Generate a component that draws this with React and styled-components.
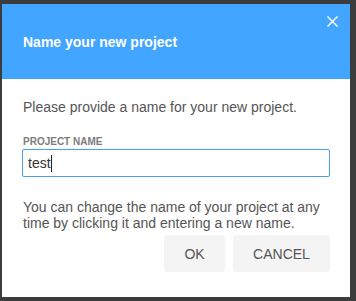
import React from "react";
import styled, { createGlobalStyle } from "styled-components";

const GlobalStyle = createGlobalStyle`
  html, body {
    margin: 0;
    padding: 0;
    background: #3c3c3c;
    font-family: "Liberation Sans", Arial, sans-serif;
  }
`;

const Page = styled.div`
  width: 356px;
  height: 301px;
  padding: 4px 0 0 2px;
  box-sizing: border-box;
  overflow: hidden;
`;

const Dialog = styled.div`
  position: relative;
  width: 348px;
  height: 293px;
  background: #ffffff;
  display: flex;
  flex-direction: column;
`;

const Header = styled.div`
  height: 75px;
  background: #42a5ff;
  display: flex;
  align-items: center;
  padding-left: 21px;
`;

const Title = styled.h2`
  margin: 0;
  color: #ffffff;
  font-size: 14px;
  font-weight: 700;
`;

const CloseButton = styled.button`
  position: absolute;
  top: 7px;
  right: 7px;
  width: 21px;
  height: 21px;
  padding: 0;
  border: 0;
  background: transparent;
  display: flex;
  align-items: center;
  justify-content: center;
  cursor: pointer;
`;

const Body = styled.div`
  padding: 20px 20px 25px 21px;
  display: flex;
  flex-direction: column;
`;

const Text = styled.p`
  margin: 0 0 ${(p) => p.$gap || 0}px;
  font-size: 14px;
  line-height: 16px;
  color: #555555;
`;

const Label = styled.label`
  font-size: 10px;
  line-height: 12px;
  font-weight: 700;
  color: #7c7c7c;
  margin-bottom: 1px;
`;

const Field = styled.div`
  height: 28px;
  margin-left: -1px;
  border: 1px solid #4a9ff5;
  border-radius: 2px;
  box-sizing: border-box;
  padding: 0 5px;
  display: flex;
  align-items: center;
  font-size: 14px;
  color: #333333;
  margin-bottom: 22px;
`;

const Caret = styled.span`
  display: inline-block;
  width: 1px;
  height: 17px;
  background: #222222;
`;

const Actions = styled.div`
  display: flex;
  justify-content: flex-end;
  gap: 8px;
  margin-top: 4px;
`;

const Button = styled.button`
  width: ${(p) => p.$width}px;
  height: 37px;
  border: 0;
  border-radius: 3px;
  background: #f4f4f4;
  color: #555555;
  font-family: "Liberation Sans", Arial, sans-serif;
  font-size: 14px;
  cursor: pointer;
`;

const App = () => {
  return (
    <Page>
      <GlobalStyle />
      <Dialog>
        <Header>
          <Title>Name your new project</Title>
        </Header>
        <CloseButton aria-label="Close">
          <svg width="11" height="11" viewBox="0 0 11 11">
            <path d="M0.5 0.5L10.5 10.5M10.5 0.5L0.5 10.5" stroke="#ffffff" strokeWidth="1.5" />
          </svg>
        </CloseButton>
        <Body>
          <Text $gap={21}>Please provide a name for your new project.</Text>
          <Label>PROJECT NAME</Label>
          <Field>
            test
            <Caret />
          </Field>
          <Text>
            You can change the name of your project at any time by clicking it
            and entering a new name.
          </Text>
          <Actions>
            <Button $width={61}>OK</Button>
            <Button $width={97}>CANCEL</Button>
          </Actions>
        </Body>
      </Dialog>
    </Page>
  );
};

export default App;
